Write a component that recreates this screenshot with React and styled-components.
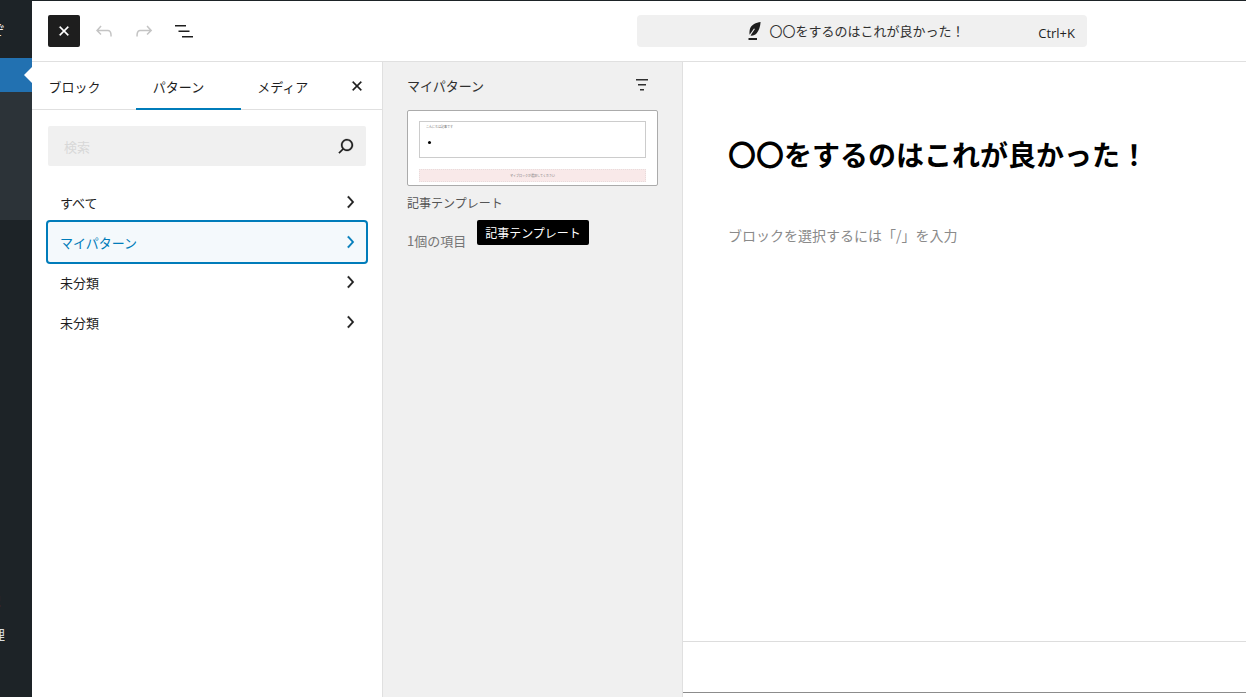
import React from 'react';
import styled, { createGlobalStyle } from 'styled-components';

const GlobalStyle = createGlobalStyle`
  html, body {
    margin: 0;
    height: 100%;
    overflow: hidden;
    background: #fff;
  }
  body {
    font-family: "Noto Sans CJK JP", "Open Sans", sans-serif;
    font-size: 13px;
    color: #1e1e1e;
  }
  * { box-sizing: border-box; }
`;

// wordpress-style 24px icons
const Icon = ({ d, size = 24, color = 'currentColor', bold = 0 }) => (
  <svg width={size} height={size} viewBox="0 0 24 24" fill={color} stroke={color} strokeWidth={bold}>
    <path d={d} />
  </svg>
);

const paths = {
  close: 'M12 13.06l3.712 3.713 1.061-1.06L13.061 12l3.712-3.712-1.06-1.06L12 10.938 8.288 7.227l-1.061 1.06L10.939 12l-3.712 3.712 1.06 1.061L12 13.061z',
  undo: 'M18.3 11.7c-.6-.6-1.4-.9-2.3-.9H6.7l2.9-3.3-1.1-1-4.5 5L8.5 16l1-1-2.7-2.7H16c.5 0 .9.2 1.3.5 1 1 1 3.4 1 4.5v.3h1.5v-.2c0-1.5 0-4.3-1.5-5.7z',
  redo: 'M15.6 6.5l-1.1 1 2.9 3.3H8c-.9 0-1.7.3-2.3.9-1.4 1.5-1.4 4.2-1.4 5.6v.2h1.5v-.3c0-1.1 0-3.5 1-4.5.3-.3.7-.5 1.3-.5h9.2L14.5 15l1.1 1.1 4.6-4.6-4.6-5z',
  list: 'M3 6h11v1.5H3V6zm3.5 5.5h11V13h-11v-1.5zM21 17H10v1.5h11V17z',
  search: 'M13 5c-3.3 0-6 2.7-6 6 0 1.4.5 2.7 1.3 3.7l-3.8 3.8 1.1 1.1 3.8-3.8c1 .8 2.3 1.3 3.7 1.3 3.3 0 6-2.7 6-6S16.3 5 13 5zm0 10.5c-2.5 0-4.5-2-4.5-4.5s2-4.5 4.5-4.5 4.5 2 4.5 4.5-2 4.5-4.5 4.5z',
  chevron: 'M10.6 6L9.4 7l4.6 5-4.6 5 1.2 1 5.4-6z',
  filter: 'M6 6h12v1.5H6zM8 11h8v1.5H8zM10 16h4v1.5h-4z',
};

const Feather = () => (
  <svg width="13" height="18" viewBox="0 0 13 18" fill="#1e1e1e">
    <path d="M12.6 0C8 .8 3.4 2.3 2 6.8c-.6 2-.6 4.6-.4 6l4.4-6.4.9.6-4.4 6.6c2 .3 4.7-.3 6.4-2.6C11 8.500 12.300 4.500 12.600 0z" />
    <rect x="0.500" y="16" width="8.500" height="2" />
  </svg>
);

const categories = ['すべて', 'マイパターン', '未分類', '未分類'];

export default function App() {
  return (
    <>
      <GlobalStyle />
      <Page>
        <AdminMenu>
          <ClippedLabel $top={21}>ぞ</ClippedLabel>
          <ActiveMenu />
          <SubMenu />
          <ClippedLabel $top={374} $width={1} $color="#f6d9a8">!</ClippedLabel>
          <ClippedLabel $top={19} $color="#d8dcde">管理</ClippedLabel>
        </AdminMenu>

        <Workspace>
          <Toolbar>
            <CloseButton><Icon d={paths.close} color="#fff" bold={0.3} /></CloseButton>
            <ToolButton $muted><Icon d={paths.undo} /></ToolButton>
            <ToolButton $muted><Icon d={paths.redo} /></ToolButton>
            <ToolButton><Icon d={paths.list} /></ToolButton>
            <DocBar>
              <DocTitle>
                <Feather />
                <span>〇〇をするのはこれが良かった！</span>
              </DocTitle>
              <Shortcut>Ctrl+K</Shortcut>
            </DocBar>
          </Toolbar>

          <Panels>
            <Inserter>
              <Tabs>
                <Tab>ブロック</Tab>
                <Tab $active>パターン</Tab>
                <Tab>メディア</Tab>
                <TabClose><Icon d={paths.close} bold={0.3} /></TabClose>
              </Tabs>
              <SearchBox>
                <SearchInput placeholder="検索" readOnly />
                <Icon d={paths.search} bold={0.25} />
              </SearchBox>
              <CategoryList>
                {categories.map((name, i) => (
                  <Category key={i} $selected={name === 'マイパターン'}>
                    <span>{name}</span>
                    <Icon d={paths.chevron} bold={0.4} />
                  </Category>
                ))}
              </CategoryList>
            </Inserter>

            <PatternPanel>
              <PatternHeader>
                <span>マイパターン</span>
                <FilterButton><Icon d={paths.filter} /></FilterButton>
              </PatternHeader>
              <PreviewCard>
                <PreviewBox>
                  <TinyText>こんにちは記事です</TinyText>
                  <PreviewDot />
                </PreviewBox>
                <PreviewNotice>
                  <TinyText>マイブロックが選択してください</TinyText>
                </PreviewNotice>
              </PreviewCard>
              <PatternName>記事テンプレート</PatternName>
              <PatternCount>1個の項目</PatternCount>
              <Tooltip>記事テンプレート</Tooltip>
            </PatternPanel>

            <Editor>
              <Canvas>
                <PostTitle>〇〇をするのはこれが良かった！</PostTitle>
                <Placeholder>ブロックを選択するには「/」を入力</Placeholder>
              </Canvas>
              <EditorFooter />
            </Editor>
          </Panels>
        </Workspace>
      </Page>
    </>
  );
}

const Page = styled.div`
  display: flex;
  height: 100vh;
  border-top: 1px solid #1d2327;
`;

const AdminMenu = styled.div`
  width: 32px;
  flex-shrink: 0;
  background: #1d2327;
  display: flex;
  flex-direction: column;
`;

/* labels of the collapsed admin menu, only their last glyph peeks in */
const ClippedLabel = styled.div`
  height: 14px;
  margin-top: ${p => p.$top}px;
  width: ${p => p.$width || 5}px;
  overflow: hidden;
  display: flex;
  justify-content: flex-end;
  align-items: center;
  white-space: nowrap;
  font-size: 14px;
  line-height: 14px;
  color: ${p => p.$color || '#f0f0f1'};
`;

const ActiveMenu = styled.div`
  height: 34px;
  margin-top: 22px;
  background: #2271b1;
  position: relative;
  &::after {
    content: "";
    position: absolute;
    right: 0;
    top: 9px;
    border: 8px solid transparent;
    border-left-width: 0;
    border-right-color: #fff;
  }
`;

const SubMenu = styled.div`
  height: 128px;
  background: #2c3338;
`;

const Workspace = styled.div`
  flex: 1;
  min-width: 0;
  display: flex;
  flex-direction: column;
`;

const Toolbar = styled.div`
  height: 61px;
  flex-shrink: 0;
  display: flex;
  align-items: center;
  gap: 8px;
  padding-left: 16px;
  border-bottom: 1px solid #e0e0e0;
`;

const CloseButton = styled.div`
  width: 32px;
  height: 32px;
  border-radius: 2px;
  background: #1e1e1e;
  display: flex;
  align-items: center;
  justify-content: center;
`;

const ToolButton = styled.div`
  width: 32px;
  height: 32px;
  display: flex;
  align-items: center;
  justify-content: center;
  color: ${p => (p.$muted ? '#c4c4c4' : '#1e1e1e')};
`;

const DocBar = styled.div`
  width: 450px;
  height: 32px;
  margin-left: 429px;
  padding: 0 12px 0 40px;
  border-radius: 4px;
  background: #f0f0f0;
  display: grid;
  grid-template-columns: 1fr auto;
  align-items: center;
`;

const DocTitle = styled.div`
  display: flex;
  align-items: center;
  justify-content: center;
  gap: 9px;
  color: #2f2f2f;
  line-height: 20px;
  padding-right: 3px;
`;

const Shortcut = styled.span`
  font-family: "Open Sans", sans-serif;
  font-size: 13px;
  padding-top: 3px;
  color: #1e1e1e;
`;

const Panels = styled.div`
  flex: 1;
  min-height: 0;
  display: flex;
`;

const Inserter = styled.div`
  width: 351px;
  flex-shrink: 0;
  border-right: 1px solid #e0e0e0;
  background: #fff;
`;

const Tabs = styled.div`
  height: 48px;
  display: flex;
  box-shadow: inset 0 -1px 0 #e0e0e0;
  position: relative;
`;

const Tab = styled.div`
  width: 104.4px;
  padding-left: 16.4px;
  display: flex;
  align-items: center;
  color: #1e1e1e;
  box-shadow: ${p => (p.$active ? 'inset 0 -2px 0 #007cba' : 'none')};
`;

const TabClose = styled.div`
  width: 24px;
  display: flex;
  align-items: center;
  justify-content: center;
`;

const SearchBox = styled.div`
  height: 40px;
  margin: 16px;
  padding: 0 8px 0 16px;
  border-radius: 2px;
  background: #f0f0f0;
  display: flex;
  align-items: center;
`;

const SearchInput = styled.input`
  flex: 1;
  min-width: 0;
  border: 0;
  outline: 0;
  padding: 0;
  background: transparent;
  font: inherit;
  &::placeholder { color: #d8d8d8; opacity: 1; }
`;

const CategoryList = styled.div`
  margin: 0 16px;
`;

const Category = styled.div`
  height: 40px;
  padding: 0 4px 0 12px;
  border-radius: 2px;
  display: flex;
  align-items: center;
  justify-content: space-between;
  color: ${p => (p.$selected ? '#007cba' : '#1e1e1e')};
  background: ${p => (p.$selected ? '#f4f9fc' : 'transparent')};
  box-shadow: ${p => (p.$selected ? '0 0 0 2px #007cba' : 'none')};
`;

const PatternPanel = styled.div`
  width: 300px;
  flex-shrink: 0;
  padding: 0 24px;
  background: #f0f0f0;
  border-right: 1px solid #e0e0e0;
  position: relative;
`;

const PatternHeader = styled.div`
  height: 48px;
  padding-bottom: 2px;
  display: flex;
  align-items: center;
  justify-content: space-between;
  color: #2f2f2f;
`;

const FilterButton = styled.div`
  margin-right: 4px;
  height: 24px;
`;

const PreviewCard = styled.div`
  height: 76px;
  padding: 10px 11px 0;
  background: #fff;
  border: 1px solid #ababab;
  border-radius: 2px;
  overflow: hidden;
`;

const PreviewBox = styled.div`
  height: 37px;
  padding: 3px 6px;
  border: 1px solid #ccc;
  position: relative;
`;

const TinyText = styled.div`
  font-size: 3px;
  line-height: 4px;
  color: #777;
`;

const PreviewDot = styled.span`
  display: block;
  width: 3px;
  height: 3px;
  margin: 12px 0 0 2px;
  border-radius: 50%;
  background: #000;
`;

const PreviewNotice = styled.div`
  height: 13px;
  margin-top: 11px;
  background: #f9e9e9;
  border: 1px dotted #e8dcdc;
  display: flex;
  align-items: center;
  justify-content: center;
`;

const PatternName = styled.div`
  margin-top: 8px;
  font-size: 12px;
  line-height: 18px;
  color: #555;
`;

const PatternCount = styled.div`
  margin-top: 19px;
  line-height: 20px;
  color: #757575;
`;

const Tooltip = styled.div`
  position: absolute;
  left: 94px;
  top: 158px;
  width: 112px;
  height: 25px;
  border-radius: 2px;
  background: #000;
  color: #fff;
  font-size: 12px;
  display: flex;
  align-items: center;
  justify-content: center;
`;

const Editor = styled.div`
  flex: 1;
  min-width: 0;
  display: flex;
  flex-direction: column;
`;

const Canvas = styled.div`
  flex: 1;
  padding: 73px 0 0 45px;
`;

const PostTitle = styled.h1`
  margin: 0;
  font-size: 28px;
  line-height: 39px;
  font-weight: 700;
  color: #000;
`;

const Placeholder = styled.p`
  margin: 51px 0 0;
  font-size: 14px;
  line-height: 20px;
  color: #8a8a8a;
`;

const EditorFooter = styled.div`
  height: 52px;
  margin-bottom: 4px;
  flex-shrink: 0;
  border-top: 1px solid #ddd;
  border-bottom: 1px solid #8c8c8c;
`;
